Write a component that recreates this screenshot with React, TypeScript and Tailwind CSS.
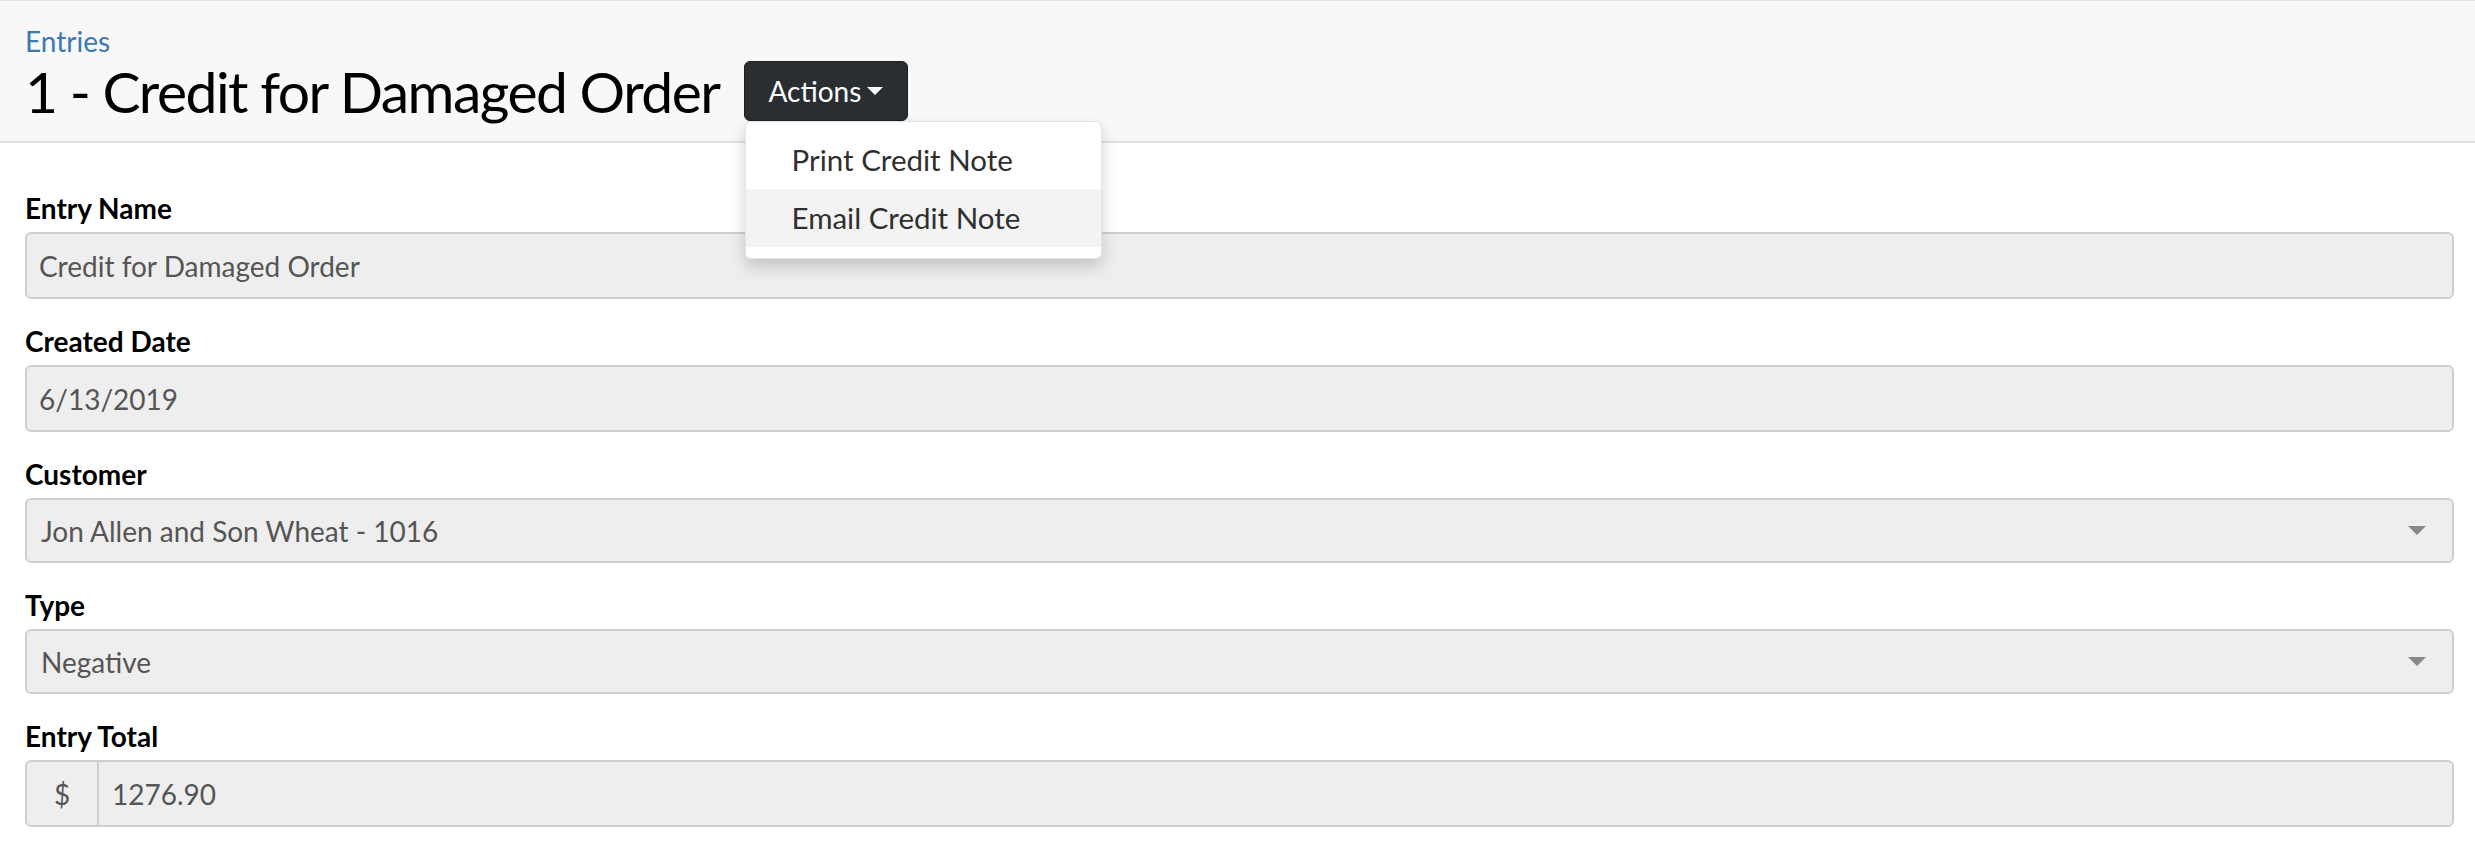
import React from "react"

const fields = [
  { label: "Entry Name", value: "Credit for Damaged Order", kind: "input" },
  { label: "Created Date", value: "6/13/2019", kind: "input" },
  { label: "Customer", value: "Jon Allen and Son Wheat - 1016", kind: "select" },
  { label: "Type", value: "Negative", kind: "select" },
]

const Caret = ({ className }: { className: string }) => (
  <svg viewBox="0 0 18 9" className={className}>
    <path d="M0 0 L18 0 L9 9 Z" fill="currentColor" />
  </svg>
)

export default function App() {
  return (
    <div className="min-h-[846px] bg-white font-['Lato','Liberation_Sans',sans-serif] text-[28px]">
      {/* ── Page header ── */}
      <div className="bg-[#f8f8f8] border-t border-[#e3e3e3] border-b-2 border-b-[#dedede] h-[143px] pl-[25px] pt-[20px]">
        <a className="block text-[#3b79b4] leading-[40px]">Entries</a>
        <div className="flex items-center gap-[24px]">
          <h1 className="text-[57px] leading-[60px] tracking-[-1.5px] text-black">1 - Credit for Damaged Order</h1>
          <div className="relative">
            <button className="flex items-center gap-[6px] h-[60px] px-[24px] bg-[#2b2e31] border border-[#1e2022] rounded-[6px] text-white">
              Actions
              <Caret className="w-[16px] h-[8px] text-white" />
            </button>

            {/* dropdown menu */}
            <div className="absolute left-[1px] top-full w-[357px] bg-white rounded-[6px] border border-black/10 shadow-[0_8px_16px_rgba(0,0,0,0.18)] pt-[9px] pb-[11px] z-10 text-[29.5px]">
              <div className="h-[58px] flex items-center pl-[46px] text-[#2f2f2f]">Print Credit Note</div>
              <div className="h-[58px] flex items-center pl-[46px] text-[#2f2f2f] bg-[#f3f3f3]">Email Credit Note</div>
            </div>
          </div>
        </div>
      </div>

      {/* ── Form ── */}
      <div className="pl-[25px] pr-[21px] pt-[48px]">
        {fields.map((f) => (
          <div key={f.label} className="mb-[25px]">
            <label className="block font-bold text-black leading-[34px] mb-[7px]">{f.label}</label>
            {f.kind === "input" ? (
              <div className="h-[67px] flex items-center px-[12px] bg-[#eeeeee] border-2 border-[#cfcfcf] rounded-[6px] text-[#555]">
                {f.value}
              </div>
            ) : (
              <div className="h-[65px] flex items-center justify-between pl-[14px] pr-[26px] bg-[#eeeeee] border-2 border-[#cfcfcf] rounded-[6px] text-[#555]">
                <span>{f.value}</span>
                <Caret className="w-[18px] h-[9px] text-[#888]" />
              </div>
            )}
          </div>
        ))}

        <div>
          <label className="block font-bold text-black leading-[34px] mb-[7px]">Entry Total</label>
          <div className="h-[67px] flex bg-[#eeeeee] border-2 border-[#cfcfcf] rounded-[6px] text-[#555]">
            <span className="w-[72px] flex items-center justify-center border-r-2 border-[#cfcfcf]">$</span>
            <span className="flex items-center pl-[13px]">1276.90</span>
          </div>
        </div>
      </div>
    </div>
  )
}
